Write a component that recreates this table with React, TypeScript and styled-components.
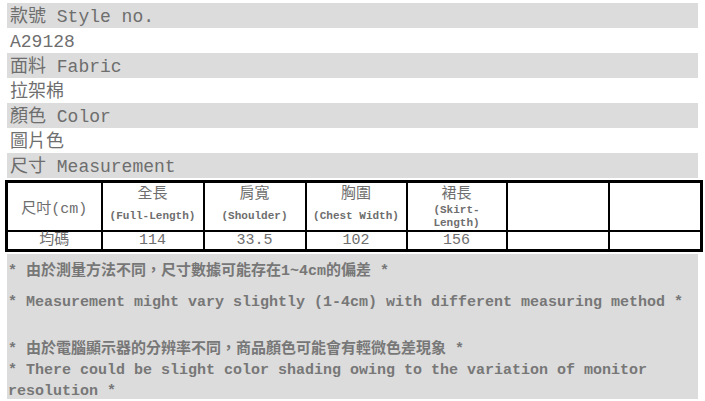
import React from "react";
import styled, { createGlobalStyle } from "styled-components";

const GlobalStyle = createGlobalStyle`
  body {
    margin: 0;
    background: #ffffff;
  }
`;

const fontStack = `"Liberation Mono", "Noto Sans CJK TC", monospace`;

const infoRows = [
  { text: "款號 Style no.", shaded: true },
  { text: "A29128", shaded: false },
  { text: "面料 Fabric", shaded: true },
  { text: "拉架棉", shaded: false },
  { text: "顏色 Color", shaded: true },
  { text: "圖片色", shaded: false },
  { text: "尺寸 Measurement", shaded: true },
];

const columns = [
  { zh: "全長", en: "(Full-Length)", wrapped: false },
  { zh: "肩寬", en: "(Shoulder)", wrapped: false },
  { zh: "胸圍", en: "(Chest Width)", wrapped: false },
  { zh: "裙長", en: "(Skirt-Length)", wrapped: true },
];

const sizeValues = ["114", "33.5", "102", "156"];
const colWidths = [95, 102, 102, 101, 100, 102, 93];

const App: React.FC = () => {
  return (
    <Page>
      <GlobalStyle />
      <InfoList>
        {infoRows.map((row) => (
          <InfoRow key={row.text} shaded={row.shaded}>
            {row.text}
          </InfoRow>
        ))}
      </InfoList>
      <SizeTable>
        <colgroup>
          {colWidths.map((w, i) => (
            <col key={i} style={{ width: w }} />
          ))}
        </colgroup>
        <tbody>
          <HeadRow>
            <HeadCell middle>尺吋(cm)</HeadCell>
            {columns.map((c) => (
              <HeadCell key={c.zh}>
                <ZhLabel>{c.zh}</ZhLabel>
                <EnLabel wrapped={c.wrapped}>{c.en}</EnLabel>
              </HeadCell>
            ))}
            <HeadCell />
            <HeadCell />
          </HeadRow>
          <BodyRow>
            <BodyCell>均碼</BodyCell>
            {sizeValues.map((v) => (
              <BodyCell key={v}>{v}</BodyCell>
            ))}
            <BodyCell />
            <BodyCell />
          </BodyRow>
        </tbody>
      </SizeTable>
      <Notes>
        <NoteLine gap={10}>* 由於測量方法不同，尺寸數據可能存在1~4cm的偏差 *</NoteLine>
        <NoteLine gap={26}>
          * Measurement might vary slightly (1-4cm) with different measuring method *
        </NoteLine>
        <NoteLine>* 由於電腦顯示器的分辨率不同，商品顏色可能會有輕微色差現象 *</NoteLine>
        <NoteLine>
          * There could be slight color shading owing to the variation of monitor resolution *
        </NoteLine>
      </Notes>
    </Page>
  );
};

const Page = styled.div`
  width: 705px;
  padding-top: 3px;
  font-family: ${fontStack};
  color: #6e6e6e;
`;

const InfoList = styled.div`
  display: flex;
  flex-direction: column;
  margin: 0 7px;
`;

const InfoRow = styled.div<{ shaded: boolean }>`
  height: 25px;
  line-height: 25px;
  padding: 2px 0 0 3px;
  box-sizing: border-box;
  font-size: 18px;
  background: ${(p) => (p.shaded ? "#dcdcdc" : "transparent")};
  white-space: nowrap;
`;

const SizeTable = styled.table`
  margin: 2px 0 0 5px;
  width: 695px;
  table-layout: fixed;
  border-collapse: collapse;
  border: 3px solid #000;
  font-family: ${fontStack};
  color: #6e6e6e;
`;

const HeadRow = styled.tr`
  height: 47px;
`;

const HeadCell = styled.td<{ middle?: boolean }>`
  border: 2px solid #000;
  padding: ${(p) => (p.middle ? "0 5px" : "3px 5px 0")};
  text-align: center;
  vertical-align: ${(p) => (p.middle ? "middle" : "top")};
  font-size: 15px;
`;

const ZhLabel = styled.div`
  font-size: 15px;
  line-height: 18px;
`;

const EnLabel = styled.div<{ wrapped: boolean }>`
  font-size: 11px;
  line-height: 13px;
  margin-top: ${(p) => (p.wrapped ? 0 : 6)}px;
  font-weight: bold;
`;

const BodyRow = styled.tr`
  height: 19px;
`;

const BodyCell = styled.td`
  border: 2px solid #000;
  padding: 0;
  text-align: center;
  font-size: 15px;
  line-height: 17px;
`;

const Notes = styled.div`
  margin: 2px 7px 0;
  height: 145px;
  padding: 7px 0 0 1px;
  box-sizing: border-box;
  background: #dcdcdc;
  color: #777;
  font-size: 15px;
  font-weight: bold;
  line-height: 21px;
`;

const NoteLine = styled.div<{ gap?: number }>`
  margin-bottom: ${(p) => p.gap ?? 0}px;
`;

export default App;
